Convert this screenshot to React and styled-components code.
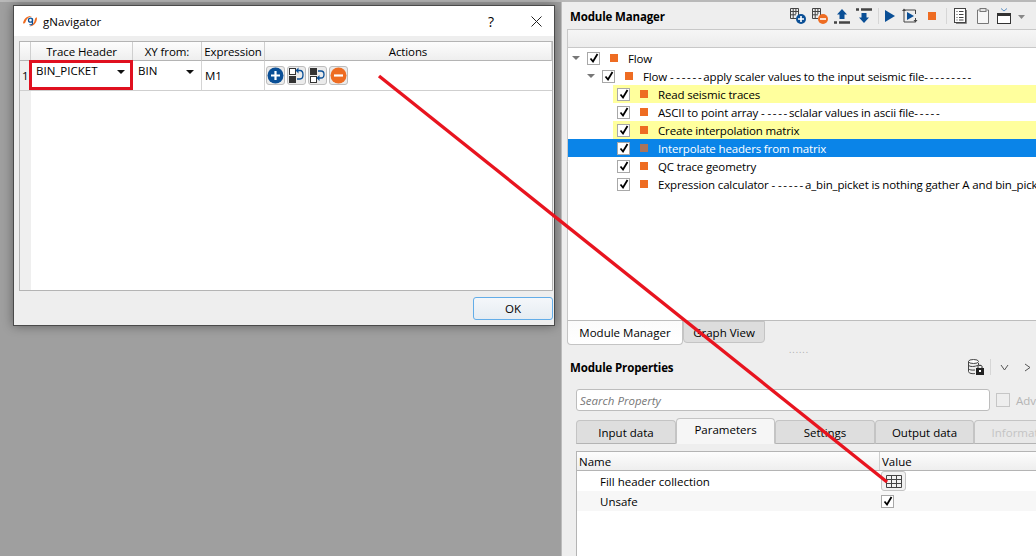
import React from 'react'
import styled, { createGlobalStyle } from 'styled-components'

const GlobalStyle = createGlobalStyle`
    html, body {
        margin: 0;
        padding: 0;
        width: 1036px;
        height: 556px;
        overflow: hidden;
        background: #9f9f9f;
        font-family: "Open Sans", "Noto Sans", sans-serif;
        font-size: 11.5px;
        color: #000;
    }
    * { box-sizing: border-box; }
`

const Page = styled.div`
    position: relative;
    display: flex;
    width: 1036px;
    height: 556px;
    border-top: 2px solid #b9b9b9;
`

const Backdrop = styled.div`
    width: 561px;
    flex: none;
    padding: 3px 0 0 13px;
    background: #9f9f9f;
`

const Dialog = styled.div`
    width: 542px;
    height: 321px;
    display: flex;
    flex-direction: column;
    background: #eeeeee;
    border: 1px solid #4a4a4a;
    box-shadow: 0 0 10px rgba(0, 0, 0, .4);
`

const TitleBar = styled.div`
    height: 30px;
    flex: none;
    display: flex;
    align-items: center;
    background: #fff;
    padding: 0 12px 0 8px;
`

const TitleText = styled.span`
    margin-left: 5px;
    flex: 1;
`

const TitleHelp = styled.span`
    font-size: 14px;
    margin-right: 37px;
`

const DialogBody = styled.div`
    flex: 1;
    display: flex;
    flex-direction: column;
    padding: 5px 1px 5px 5px;
`

const Table = styled.div`
    flex: 1;
    display: grid;
    grid-template-columns: 11px 102px 69px 63px 1fr;
    grid-template-rows: 19px 30px 1fr;
    border: 1px solid #b4b4b4;
    background: #fff;
`

const HeaderCell = styled.div`
    display: flex;
    align-items: center;
    justify-content: center;
    letter-spacing: -.1px;
    background: linear-gradient(#fdfdfd, #eeeeee);
    border-right: 1px solid #cfcfcf;
    border-bottom: 1px solid #b4b4b4;
`

const RowNumber = styled.div`
    background: #efefef;
    border-bottom: 1px solid #cfcfcf;
    display: flex;
    align-items: center;
    padding-left: 2px;
`

const Cell = styled.div`
    position: relative;
    display: flex;
    align-items: ${p => (p.$top ? 'flex-start' : 'center')};
    padding: ${p => (p.$top ? '2px 3px 0 5px' : '0 3px')};
    border-right: 1px solid #d4d4d4;
    border-bottom: 1px solid #cfcfcf;
`

const ComboText = styled.span`
    flex: 1;
    white-space: nowrap;
`

const ComboArrow = styled.i`
    width: 0;
    height: 0;
    margin: 7px 4px 0 0;
    border-left: 4px solid transparent;
    border-right: 4px solid transparent;
    border-top: 4px solid #111;
`

const Highlight = styled.div`
    position: absolute;
    left: -2px;
    top: -1px;
    width: 104px;
    height: 30px;
    border: 3px solid #e0101f;
`

const ActionCell = styled(Cell)`
    gap: 2px;
    padding: 0 0 0 1px;
    border-right: 0;
`

const ActionButton = styled.button`
    width: 19px;
    height: 19px;
    padding: 0;
    display: flex;
    align-items: center;
    justify-content: center;
    background: #ebebeb;
    border: 1px solid #bdbdbd;
    border-radius: 3px;
`

const GutterFill = styled.div`
    background: #efefef;
`

const EmptyFill = styled.div`
    grid-column: 2 / -1;
`

const DialogFooter = styled.div`
    display: flex;
    justify-content: flex-end;
    padding-top: 6px;
`

const OkButton = styled.button`
    width: 80px;
    height: 23px;
    font: inherit;
    background: linear-gradient(#f4f7fa, #e6ecf2);
    border: 1px solid #63ade8;
    border-radius: 3px;
`

const Panel = styled.div`
    flex: 1;
    min-width: 0;
    display: flex;
    flex-direction: column;
    background: #eeeeee;
    border-left: 1px solid #bcbcbc;
    overflow: hidden;
`

const PanelHead = styled.div`
    height: 27px;
    flex: none;
    display: flex;
    align-items: center;
    padding: 1px 0 0 8px;
`

const PanelTitle = styled.div`
    width: 220px;
    flex: none;
    font-weight: 700;
    letter-spacing: -.15px;
`

const Toolbar = styled.div`
    display: flex;
    align-items: center;
    gap: 6px;
`

const ToolSep = styled.div`
    width: 1px;
    height: 16px;
    background: #d6d6d6;
`

const ToolStrip = styled.div`
    height: 19px;
    flex: none;
    margin-left: 5px;
    background: linear-gradient(#f6f6f6, #ececec);
    border: 1px solid #c8c8c8;
    border-right: 0;
`

const Tree = styled.div`
    height: 273px;
    flex: none;
    margin-left: 5px;
    padding-top: 1px;
    background: #fff;
    border-left: 1px solid #c8c8c8;
    border-bottom: 1px solid #bdbdbd;
`

const TreeRow = styled.div`
    display: flex;
    align-items: stretch;
    height: 18px;
    padding-left: ${p => p.$level * 15}px;
    letter-spacing: -.15px;
    background: ${p => (p.$selected ? '#0a84e8' : 'transparent')};
    color: ${p => (p.$selected ? '#fff' : '#000')};
`

const Expander = styled.div`
    width: 15px;
    flex: none;
    display: flex;
    align-items: center;
    padding-left: 4px;
`

const ExpanderArrow = styled.i`
    width: 0;
    height: 0;
    border-left: 4px solid transparent;
    border-right: 4px solid transparent;
    border-top: 4px solid #777;
`

const RowBody = styled.div`
    flex: 1;
    min-width: 0;
    display: flex;
    align-items: center;
    padding-left: 4px;
    background: ${p => (p.$marked ? '#ffff9d' : 'transparent')};
    white-space: pre;
    overflow: hidden;
`

const DashRun = styled.span`
    letter-spacing: 1.7px;
`

const CheckBox = styled.span`
    width: 13px;
    height: 13px;
    flex: none;
    display: inline-flex;
    align-items: center;
    justify-content: center;
    background: #fff;
    border: 1px solid #a8a8a8;
`

const StatusSquare = styled.i`
    width: 8px;
    height: 8px;
    flex: none;
    margin: 0 10px 0 10px;
    background: ${p => (p.$selected ? '#a9735c' : '#ee6c22')};
`

const TabBar = styled.div`
    display: flex;
    align-items: flex-start;
    margin-left: ${p => p.$inset}px;
    flex: none;
`

const BottomTab = styled.div`
    height: ${p => (p.$active ? 24 : 22)}px;
    width: ${p => p.$width}px;
    display: flex;
    align-items: center;
    justify-content: center;
    background: ${p => (p.$active ? 'linear-gradient(#fbfbfb, #ffffff)' : '#dddddd')};
    border: 1px solid #c4c4c4;
    border-top: ${p => (p.$active ? 0 : '1px solid #c4c4c4')};
    border-radius: 0 0 4px 4px;
`

const SplitHandle = styled.div`
    height: 8px;
    flex: none;
    display: flex;
    align-items: center;
    justify-content: center;
    color: #aaa;
    font-size: 9px;
    letter-spacing: 1px;
    line-height: 1;
`

const PropsHead = styled.div`
    height: 28px;
    flex: none;
    display: flex;
    align-items: center;
    padding-left: 8px;
`

const PropsTitle = styled(PanelTitle)`
    width: 398px;
`

const PropsTools = styled.div`
    display: flex;
    align-items: center;
    gap: 6px;
`

const ChevronGroup = styled.div`
    display: flex;
    align-items: center;
    gap: 14px;
    margin-left: 3px;
`

const SearchRow = styled.div`
    display: flex;
    align-items: center;
    gap: 6px;
    padding: 8px 0 0 14px;
    flex: none;
`

const SearchBox = styled.div`
    width: 414px;
    height: 22px;
    flex: none;
    display: flex;
    align-items: center;
    padding-left: 3px;
    font-style: italic;
    color: #777;
    background: #fff;
    border: 1px solid #bdbdbd;
    border-radius: 3px;
`

const GrayCheck = styled.span`
    width: 14px;
    height: 14px;
    flex: none;
    border: 1px solid #c6c6c6;
`

const FadedLabel = styled.span`
    color: #b4b4b4;
    white-space: nowrap;
`

const PropTabs = styled.div`
    height: 26px;
    flex: none;
    display: flex;
    align-items: flex-end;
    margin: 7px 0 0 14px;
`

const PropTab = styled.div`
    width: ${p => p.$width}px;
    height: ${p => (p.$active ? 26 : 24)}px;
    flex: none;
    display: flex;
    align-items: center;
    justify-content: center;
    padding-bottom: ${p => (p.$active ? 4 : 0)}px;
    color: ${p => (p.$disabled ? '#c4c4c4' : '#000')};
    background: ${p => (p.$active ? '#f6f6f6' : p.$disabled ? '#e8e8e8' : '#dedede')};
    border: 1px solid #c4c4c4;
    border-bottom-color: ${p => (p.$active ? '#f6f6f6' : '#b4b4b4')};
    border-radius: 4px 4px 0 0;
    white-space: nowrap;
    overflow: hidden;
`

const PropGrid = styled.div`
    flex: 1;
    margin: 7px 0 0 14px;
    background: #fff;
    border: 1px solid #b4b4b4;
    border-right: 0;
    border-bottom: 0;
`

const PropHeader = styled.div`
    display: grid;
    grid-template-columns: 303px 1fr;
    height: 19px;
    background: linear-gradient(#fdfdfd, #eeeeee);
    border-bottom: 1px solid #b4b4b4;
`

const PropHeaderCell = styled.div`
    display: flex;
    align-items: center;
    padding-left: 2px;
    border-right: 1px solid #cfcfcf;
    &:last-child { border-right: 0; }
`

const PropRow = styled.div`
    display: grid;
    grid-template-columns: 303px 1fr;
    height: 20px;
    align-items: center;
    background: ${p => (p.$alt ? '#f7f7f7' : '#fff')};
`

const PropName = styled.div`
    padding-left: 23px;
`

const TableButton = styled.button`
    width: 25px;
    height: 20px;
    padding: 0;
    margin-left: 1px;
    display: flex;
    align-items: center;
    justify-content: center;
    background: #f2f2f2;
    border: 1px solid #c4c4c4;
    border-radius: 3px;
`

const PropCheck = styled(CheckBox)`
    margin-left: 1px;
`

const Overlay = styled.svg`
    position: absolute;
    left: 0;
    top: -2px;
    pointer-events: none;
`

const Glyph = styled.svg`
    display: block;
    flex: none;
`

const BLUE = '#0a4f96'
const ORANGE = '#ee6c22'

const Tick = () => (
    <Glyph width="10" height="10" viewBox="0 0 10 10">
        <path d="M1.5 5.5 L4 8.5 L8.5 1" fill="none" stroke="#000" strokeWidth="1.8" />
    </Glyph>
)

const Logo = () => (
    <Glyph width="16" height="14" viewBox="0 0 16 14">
        <path d="M1 9 C2 4 6 1.5 10 2 C7 2.5 4.5 5 3.5 8 C3 9.5 1.5 10 1 9 Z" fill={ORANGE} />
        <path d="M15 4 C15 9 11 12.5 7 12.5 C10 11.5 12.5 9 13 5 C13.2 3.8 14.8 3 15 4 Z" fill={ORANGE} />
        <circle cx="8.5" cy="6.2" r="2" fill="none" stroke={BLUE} strokeWidth="1.3" />
        <path d="M10.5 4.5 V9.5 C10.5 11 8.5 11 7.5 10.5" fill="none" stroke={BLUE} strokeWidth="1.2" />
    </Glyph>
)

const Circle = ({ color, minus }) => (
    <Glyph width="17" height="17" viewBox="0 0 17 17">
        <circle cx="8.5" cy="8.5" r="8" fill={color} />
        <path d={minus ? 'M4 8.5 H13' : 'M4 8.5 H13 M8.5 4 V13'} stroke="#fff" strokeWidth="2.2" />
    </Glyph>
)

const Swap = ({ flip }) => (
    <Glyph width="17" height="17" viewBox="0 0 17 17">
        <rect x="1.5" y={flip ? 9.5 : 1.5} width="6" height="6" fill="#fff" stroke="#333" />
        <rect x="1" y={flip ? 1 : 9} width="7" height="7" fill="#333" />
        <path d={flip ? 'M9 4 H12 C16 4 16 11 12 11 H10' : 'M10 3.5 H12 C16 3.5 16 12 12 12 H9'} fill="none" stroke={BLUE} strokeWidth="1.3" />
        <path d={flip ? 'M10.5 8 L7.5 11 L10.5 14 Z' : 'M10.5 .5 L7.5 3.5 L10.5 6.5 Z'} fill={BLUE} />
    </Glyph>
)

const GridBadge = ({ minus }) => (
    <Glyph width="16" height="16" viewBox="0 0 16 16">
        <path d="M.5.5 H8.5 V7 M.5.5 V10.5 H6 M3.2.5 V10.5 M5.9.5 V6 M.5 3.5 H8.5 M.5 6.8 H6" fill="none" stroke="#444" />
        <circle cx="11" cy="11" r="5" fill={minus ? ORANGE : BLUE} />
        <path d={minus ? 'M8 11 H14' : 'M8 11 H14 M11 8 V14'} stroke="#fff" strokeWidth="1.6" />
    </Glyph>
)

const MoveUp = () => (
    <Glyph width="16" height="16" viewBox="0 0 16 16">
        <path d="M8 1 L13 6.5 H10.5 V11 H5.5 V6.5 H3 Z" fill={BLUE} />
        <path d="M0 14.5 H3 M5 14.5 H16" stroke="#444" strokeWidth="2.4" />
    </Glyph>
)

const MoveDown = () => (
    <Glyph width="16" height="16" viewBox="0 0 16 16">
        <path d="M0 1.5 H3 M5 1.5 H16" stroke="#444" strokeWidth="2.4" />
        <path d="M8 15 L13 9.5 H10.5 V5 H5.5 V9.5 H3 Z" fill={BLUE} />
    </Glyph>
)

const Play = () => (
    <Glyph width="10" height="14" viewBox="0 0 10 14">
        <path d="M0 1 L10 7 L0 13 Z" fill={BLUE} />
    </Glyph>
)

const StepRun = () => (
    <Glyph width="17" height="16" viewBox="0 0 17 16">
        <path d="M3 2 V14 H14.5 V10 M14.5 6 V2 H3" fill="none" stroke="#444" />
        <path d="M6 4 L13 8 L6 12 Z" fill={BLUE} />
        <path d="M3 .5 L1 3 H5 Z M14.5 14.5 L12.5 12 H16.5 Z" fill="#444" />
    </Glyph>
)

const Stop = () => (
    <Glyph width="16" height="16" viewBox="0 0 16 16">
        <rect x="4" y="4" width="8" height="8" fill={ORANGE} />
    </Glyph>
)

const ListDoc = () => (
    <Glyph width="16" height="16" viewBox="0 0 16 16">
        <rect x="1.5" y=".5" width="11" height="14" fill="#fff" stroke="#444" />
        <path d="M13.5 2 V15.5 H3" fill="none" stroke="#888" />
        <path d="M3.5 3.5 H4.5 M6 3.5 H10.5 M3.5 6.5 H4.5 M6 6.5 H10.5 M3.5 9.5 H4.5 M6 9.5 H10.5 M3.5 12 H4.5 M6 12 H10.5" stroke="#444" />
    </Glyph>
)

const Clipboard = () => (
    <Glyph width="16" height="16" viewBox="0 0 16 16">
        <path d="M4.5 2 H2.5 V15.5 H13.5 V2 H11.5" fill="#f6f6f6" stroke="#777" />
        <rect x="5" y=".5" width="6" height="3" fill="#e4e4e4" stroke="#777" />
    </Glyph>
)

const WindowIcon = () => (
    <Glyph width="14" height="16" viewBox="0 0 14 16">
        <rect x=".5" y="5.5" width="13" height="10" fill="#fff" stroke="#333" />
        <rect x="0" y="5" width="14" height="3" fill="#333" />
        <path d="M4 .5 L7 3 M10 .5 L7 3" stroke="#5a8fc4" />
    </Glyph>
)

const DownCaret = () => (
    <Glyph width="9" height="16" viewBox="0 0 9 16">
        <path d="M1 7 H8 L4.5 11 Z" fill="#888" />
    </Glyph>
)

const DbLock = () => (
    <Glyph width="16" height="16" viewBox="0 0 16 16">
        <ellipse cx="5.5" cy="2.5" rx="5" ry="2" fill="#fff" stroke="#444" />
        <path d="M.5 2.5 V12.5 C.5 14.5 5 15 7 14.5 M.5 6 C1 8 7 8 10.5 6 V4 M.5 9.5 C1 11 4 11.3 7 11" fill="none" stroke="#444" />
        <rect x="8" y="9" width="8" height="7" fill="#222" />
        <path d="M10 9 V7.5 C10 5.8 14 5.8 14 7.5 V9" fill="none" stroke="#222" />
        <rect x="11" y="11" width="2" height="2" fill="#fff" />
    </Glyph>
)

const Chevron = ({ right }) => (
    <Glyph width="9" height="9" viewBox="0 0 9 9">
        <path d={right ? 'M2 1 L7 4.5 L2 8' : 'M1 2 L4.5 7 L8 2'} fill="none" stroke="#555" />
    </Glyph>
)

const TableIcon = () => (
    <Glyph width="16" height="13" viewBox="0 0 16 13">
        <path d="M.5.5 H15.5 V12.5 H.5 Z M.5 4.5 H15.5 M.5 8.5 H15.5 M5.5.5 V12.5 M10.5.5 V12.5" fill="none" stroke="#444" />
    </Glyph>
)

const CloseX = () => (
    <Glyph width="11" height="11" viewBox="0 0 11 11">
        <path d="M.5.5 L10.5 10.5 M10.5.5 L.5 10.5" stroke="#222" />
    </Glyph>
)

const flowItems = [
    { level: 0, label: 'Flow', arrow: true },
    { level: 1, label: 'Flow - -----apply scaler values to the input seismic file---------', arrow: true },
    { level: 2, label: 'Read seismic traces', marked: true },
    { level: 2, label: 'ASCII to point array - ----sclalar values in ascii file-----' },
    { level: 2, label: 'Create interpolation matrix', marked: true },
    { level: 2, label: 'Interpolate headers from matrix', selected: true },
    { level: 2, label: 'QC trace geometry' },
    { level: 2, label: 'Expression calculator - -----a_bin_picket is nothing gather A and bin_picket' },
]

// the long dash runs sit wider in the reference font
const renderLabel = label =>
    label.split(/(-{2,})/).map((part, i) => (part.startsWith('--') ? <DashRun key={i}>{part}</DashRun> : part))

function App() {
    return (
        <Page>
            <GlobalStyle />
            <Backdrop>
                <Dialog>
                    <TitleBar>
                        <Logo />
                        <TitleText>gNavigator</TitleText>
                        <TitleHelp>?</TitleHelp>
                        <CloseX />
                    </TitleBar>
                    <DialogBody>
                        <Table>
                            <HeaderCell />
                            <HeaderCell>Trace Header</HeaderCell>
                            <HeaderCell>XY from:</HeaderCell>
                            <HeaderCell>Expression</HeaderCell>
                            <HeaderCell>Actions</HeaderCell>
                            <RowNumber>1</RowNumber>
                            <Cell $top>
                                <ComboText>BIN_PICKET</ComboText>
                                <ComboArrow />
                                <Highlight />
                            </Cell>
                            <Cell $top>
                                <ComboText>BIN</ComboText>
                                <ComboArrow />
                            </Cell>
                            <Cell>M1</Cell>
                            <ActionCell>
                                <ActionButton><Circle color={BLUE} /></ActionButton>
                                <ActionButton><Swap /></ActionButton>
                                <ActionButton><Swap flip /></ActionButton>
                                <ActionButton><Circle color={ORANGE} minus /></ActionButton>
                            </ActionCell>
                            <GutterFill />
                            <EmptyFill />
                        </Table>
                        <DialogFooter>
                            <OkButton>OK</OkButton>
                        </DialogFooter>
                    </DialogBody>
                </Dialog>
            </Backdrop>
            <Panel>
                <PanelHead>
                    <PanelTitle>Module Manager</PanelTitle>
                    <Toolbar>
                        <GridBadge />
                        <GridBadge minus />
                        <MoveUp />
                        <MoveDown />
                        <ToolSep />
                        <Play />
                        <StepRun />
                        <Stop />
                        <ToolSep />
                        <ListDoc />
                        <Clipboard />
                        <WindowIcon />
                        <DownCaret />
                    </Toolbar>
                </PanelHead>
                <ToolStrip />
                <Tree>
                    {flowItems.map(item => (
                        <TreeRow key={item.label} $level={item.level} $selected={item.selected}>
                            <Expander>{item.arrow && <ExpanderArrow />}</Expander>
                            <RowBody $marked={item.marked}>
                                <CheckBox><Tick /></CheckBox>
                                <StatusSquare $selected={item.selected} />
                                <span>{renderLabel(item.label)}</span>
                            </RowBody>
                        </TreeRow>
                    ))}
                </Tree>
                <TabBar $inset={5}>
                    <BottomTab $active $width={116}>Module Manager</BottomTab>
                    <BottomTab $width={82}>Graph View</BottomTab>
                </TabBar>
                <SplitHandle>......</SplitHandle>
                <PropsHead>
                    <PropsTitle>Module Properties</PropsTitle>
                    <PropsTools>
                        <DbLock />
                        <ToolSep />
                        <ChevronGroup>
                            <Chevron />
                            <Chevron right />
                        </ChevronGroup>
                    </PropsTools>
                </PropsHead>
                <SearchRow>
                    <SearchBox>Search Property</SearchBox>
                    <GrayCheck />
                    <FadedLabel>Advanced</FadedLabel>
                </SearchRow>
                <PropTabs>
                    <PropTab $width={100}>Input data</PropTab>
                    <PropTab $active $width={99}>Parameters</PropTab>
                    <PropTab $width={100}>Settings</PropTab>
                    <PropTab $width={99}>Output data</PropTab>
                    <PropTab $disabled $width={99}>Information</PropTab>
                </PropTabs>
                <PropGrid>
                    <PropHeader>
                        <PropHeaderCell>Name</PropHeaderCell>
                        <PropHeaderCell>Value</PropHeaderCell>
                    </PropHeader>
                    <PropRow>
                        <PropName>Fill header collection</PropName>
                        <TableButton><TableIcon /></TableButton>
                    </PropRow>
                    <PropRow $alt>
                        <PropName>Unsafe</PropName>
                        <PropCheck><Tick /></PropCheck>
                    </PropRow>
                </PropGrid>
            </Panel>
            <Overlay width="1036" height="556" viewBox="0 0 1036 556">
                <path d="M379 76 L887 482" stroke="#e8141f" strokeWidth="3.4" />
            </Overlay>
        </Page>
    )
}

export default App
